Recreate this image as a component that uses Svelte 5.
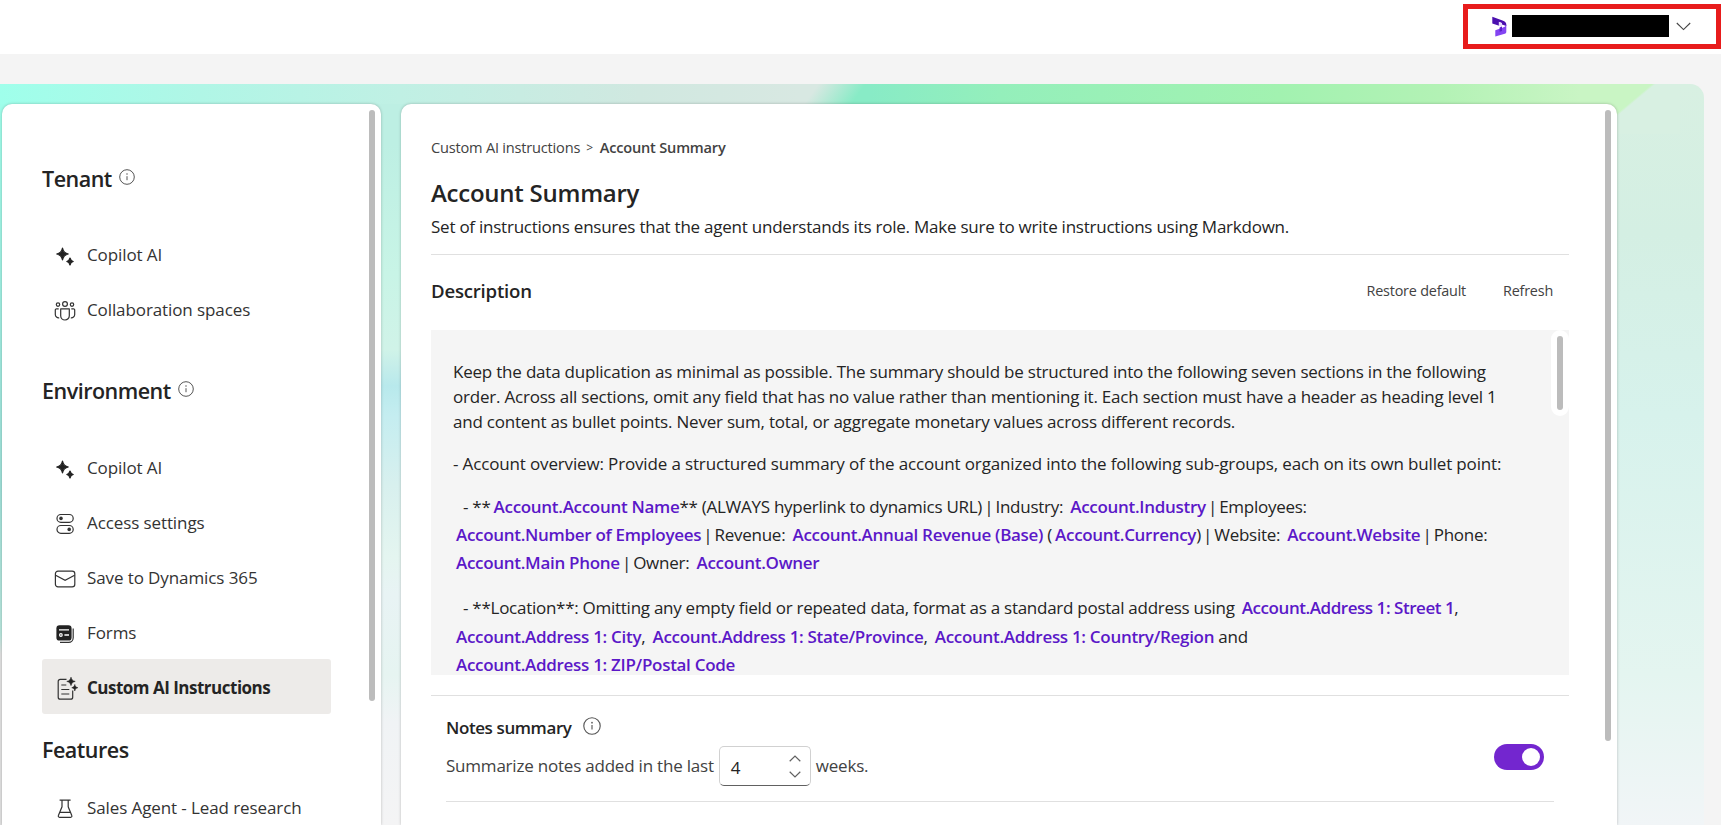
<script>
  const groups = [
    {
      title: 'Tenant',
      info: true,
      items: [
        { label: 'Copilot AI', icon: 'sparkle' },
        { label: 'Collaboration spaces', icon: 'people' },
      ],
    },
    {
      title: 'Environment',
      info: true,
      items: [
        { label: 'Copilot AI', icon: 'sparkle' },
        { label: 'Access settings', icon: 'toggles' },
        { label: 'Save to Dynamics 365', icon: 'mail' },
        { label: 'Forms', icon: 'forms' },
        { label: 'Custom AI Instructions', icon: 'doc', active: true },
      ],
    },
    {
      title: 'Features',
      items: [{ label: 'Sales Agent - Lead research', icon: 'flask' }],
    },
  ];

  let weeks = $state(4);
  let enabled = $state(true);
</script>

{#snippet info(size)}
  <svg class="info" width={size} height={size} viewBox="0 0 16 16" fill="none" stroke="#555">
    <circle cx="8" cy="8" r="7.3" />
    <path d="M8 7.2v4" />
    <circle cx="8" cy="5" r=".75" fill="#555" stroke="none" />
  </svg>
{/snippet}

{#snippet icon(name)}
  <svg class="icon" width="22" height="22" viewBox="0 0 22 22" fill="none" stroke="#333" stroke-width="1.2">
    {#if name === 'sparkle'}
      <g fill="#222" stroke="#222" stroke-width="1.2" stroke-linejoin="round">
        <path d="M8.500 3C9.300 6.800 11 8.300 14.300 9C11 9.700 9.300 11.200 8.500 15C7.700 11.200 6 9.700 2.700 9C6 8.300 7.700 6.800 8.500 3Z" />
        <path d="M16 13C16.500 15.200 17.200 16 19.200 16.500C17.200 17 16.500 17.800 16 20C15.500 17.800 14.800 17 12.800 16.500C14.800 16 15.500 15.200 16 13Z" />
      </g>
    {:else if name === 'people'}
      <circle cx="11" cy="4" r="2.4" />
      <circle cx="4" cy="4.600" r="1.700" />
      <circle cx="18" cy="4.600" r="1.700" />
      <path d="M6.700 8.800h8.600v6.900a4.300 4.300 0 0 1-8.600 0z" stroke-linejoin="round" />
      <path d="M4.700 8.800H2.600a1.300 1.300 0 0 0-1.300 1.300v4.400a3.400 3.400 0 0 0 3.900 3.300M17.300 8.800h2.100a1.300 1.300 0 0 1 1.300 1.300v4.400a3.400 3.400 0 0 1-3.900 3.300" />
    {:else if name === 'toggles'}
      <rect x="3" y="1.500" width="16.200" height="7.800" rx="3.900" />
      <circle cx="7" cy="5.400" r="1.800" fill="#333" stroke="none" />
      <rect x="3" y="12.500" width="16.200" height="7.800" rx="3.900" />
      <circle cx="15.200" cy="16.400" r="1.800" fill="#333" stroke="none" />
    {:else if name === 'mail'}
      <rect x="1.400" y="3.200" width="19.400" height="15.600" rx="2.600" />
      <path d="M1.600 7.200l9.500 5.200 9.500-5.200" />
    {:else if name === 'forms'}
      <rect x="2.400" y="2.200" width="15.200" height="15.400" rx="3.200" fill="#222" stroke="none" />
      <path d="M5 6.900h10M10.400 12h4.600" stroke="#fff" stroke-width="1.300" />
      <circle cx="6.900" cy="12" r="1.300" stroke="#fff" />
      <path d="M19.200 5.500v9.300a4.600 4.600 0 0 1-4.600 4.600H6" />
    {:else if name === 'doc'}
      <path d="M12.500 1.400H6.200a2 2 0 0 0-2 2v15.800a2 2 0 0 0 2 2h10.500a2 2 0 0 0 2-2V12.500" />
      <path d="M7.300 7h5M7.300 11.500h8M7.300 16h8" />
      <g fill="#222" stroke="#222" stroke-width=".6">
        <path d="M17 -.8C17.700 1.900 18.500 2.700 21.200 3.400C18.500 4.100 17.700 4.900 17 7.600C16.300 4.900 15.500 4.100 12.800 3.400C15.500 2.700 16.300 1.900 17 -.8Z" />
        <path d="M20.800 6.500C21.200 8.500 21.800 9.100 23.800 9.700C21.800 10.300 21.200 10.900 20.800 12.900C20.400 10.900 19.800 10.300 17.800 9.700C19.800 9.100 20.400 8.500 20.800 6.500Z" />
      </g>
    {:else if name === 'flask'}
      <path d="M5.600 2.200h11M8 2.400v6.400L4.400 17.600a1.200 1.200 0 0 0 1.100 1.700h11.200a1.200 1.200 0 0 0 1.100-1.700L14.200 8.800V2.400M5.700 14.400h10.800" />
    {/if}
  </svg>
{/snippet}

{#snippet bar()}<span class="bar">|</span>{/snippet}

<div class="app">
  <header>
    <div class="env-picker">
      <svg width="15" height="21" viewBox="0 0 15 21">
        <path d="M.3.800L10.500 4.600C13.200 5.600 14.300 6.600 14.300 9v1L10 8.500V7.200L7.200 6v3.800L.3 7.400z" fill="#4b0fae" />
        <path d="M6.800 5.800L10 7v4L6.800 9.800z" fill="#e9dcff" />
        <path d="M14.300 8v7.800c0 1-.5 1.600-1.500 2L3.300 20.600V14.200L9 12.200C11 11.500 14 11 14.300 8z" fill="#8344f2" />
        <path d="M7.600 11.500L10 10.600V15L7.600 15.800z" fill="#5a1ec8" />
      </svg>
      <span class="redacted"></span>
      <svg width="15" height="9" viewBox="0 0 15 9" fill="none" stroke="#444" stroke-width="1.100">
        <path d="M.8 1l6.700 6.600L14.200 1" />
      </svg>
    </div>
  </header>

  <div class="stage">
    <nav class="card">
      <div class="nav-list">
        {#each groups as g (g.title)}
          <section>
            <h2>{g.title}{#if g.info}{@render info(16)}{/if}</h2>
            {#each g.items as item (item.label)}
              <a class="nav-item" class:active={item.active} href="#top">
                {@render icon(item.icon)}
                <span>{item.label}</span>
              </a>
            {/each}
          </section>
        {/each}
      </div>
      <div class="thumb nav-thumb"></div>
    </nav>

    <main class="card">
      <div class="content">
        <div class="crumbs">
          <span>Custom AI instructions</span>
          <span class="sep">&gt;</span>
          <b>Account Summary</b>
        </div>
        <h1>Account Summary</h1>
        <p class="lead">Set of instructions ensures that the agent understands its role. Make sure to write instructions using Markdown.</p>

        <div class="toolbar">
          <h3>Description</h3>
          <button class="restore">Restore default</button>
          <button>Refresh</button>
        </div>

        <div class="editor">
          <div class="text">
            <p>
              Keep the data duplication as minimal as possible. The summary should be structured into the following seven sections in the following<br />
              order. Across all sections, omit any field that has no value rather than mentioning it. Each section must have a header as heading level 1<br />
              and content as bullet points. Never sum, total, or aggregate monetary values across different records.
            </p>
            <p class="overview">- Account overview: Provide a structured summary of the account organized into the following sub-groups, each on its own bullet point:</p>
            <p class="fields">
              <span class="indent">- **</span><b>Account.Account Name</b>** (ALWAYS hyperlink to dynamics URL) {@render bar()} Industry: <b>Account.Industry</b> {@render bar()} Employees:<br />
              <b>Account.Number of Employees</b> {@render bar()} Revenue: <b>Account.Annual Revenue (Base)</b> (<b>Account.Currency</b>) {@render bar()} Website: <b>Account.Website</b> {@render bar()} Phone:<br />
              <b>Account.Main Phone</b> {@render bar()} Owner: <b>Account.Owner</b>
            </p>
            <p class="fields address">
              <span class="indent">- **Location**: Omitting any empty field or repeated data, format as a standard postal address using</span> <b class="street">Account.Address 1: Street 1</b>,<br />
              <b>Account.Address 1: City</b>, <b>Account.Address 1: State/Province</b>, <b>Account.Address 1: Country/Region</b> and<br />
              <b>Account.Address 1: ZIP/Postal Code</b>
            </p>
          </div>
          <div class="track"><div class="thumb"></div></div>
        </div>

        <div class="notes">
          <div class="notes-text">
            <h4>Notes summary {@render info(18)}</h4>
            <div class="weeks">
              <span>Summarize notes added in the last</span>
              <div class="spin">
                <span>{weeks}</span>
                <div class="arrows">
                  <button aria-label="More" onclick={() => weeks++}>
                    <svg width="12" height="7" viewBox="0 0 12 7"><path d="M.7 6.200L6 1l5.300 5.200" /></svg>
                  </button>
                  <button aria-label="Less" onclick={() => weeks--}>
                    <svg width="12" height="7" viewBox="0 0 12 7"><path d="M.7.800L6 6l5.300-5.200" /></svg>
                  </button>
                </div>
              </div>
              <span>weeks.</span>
            </div>
          </div>
          <button class="switch" class:on={enabled} aria-label="Notes summary" onclick={() => (enabled = !enabled)}>
            <i></i>
          </button>
        </div>
      </div>
      <div class="thumb main-thumb"></div>
    </main>
  </div>
</div>

<style>
  :global(body) {
    background: #f4f4f4;
    overflow: hidden;
  }

  .app {
    display: flex;
    flex-direction: column;
    height: 825px;
    overflow: hidden;
    font-family: 'Open Sans', 'Noto Sans', sans-serif;
    font-size: 17px;
    letter-spacing: -0.21px;
    color: #242424;
  }

  h1, h2, h3, h4, p {
    margin: 0;
    font-weight: 600;
  }
  p {
    font-weight: 400;
  }
  b {
    font-weight: 600;
  }
  button {
    all: unset;
    cursor: pointer;
  }
  svg {
    display: block;
    flex: none;
    overflow: visible;
  }

  header {
    display: flex;
    justify-content: flex-end;
    align-items: flex-start;
    flex: none;
    height: 54px;
    padding-top: 4px;
    box-sizing: border-box;
    background: #fff;
  }
  .env-picker {
    display: flex;
    align-items: center;
    width: 258px;
    height: 45px;
    padding: 0 0 0 24px;
    box-sizing: border-box;
    border: 5px solid #e81c1c;
  }
  .redacted {
    width: 157px;
    height: 22px;
    margin: 0 7px 1px 5px;
    background: #000;
  }

  .stage {
    display: flex;
    gap: 20px;
    flex: 1;
    min-height: 0;
    width: 1704px;
    margin-top: 30px;
    padding: 20px 0 0 2px;
    box-sizing: border-box;
    border-radius: 0 14px 0 0;
    background:
      linear-gradient(140deg, #c9f5c4 49%, #d8f0e2 51%) 1580px -10px / 100px 60px no-repeat,
      linear-gradient(90deg, #88ebc6, #94efbb 130px, #a2f2b0 410px, #b3f2b5 570px, #c9f5c4) 870px 0 / 710px 20px no-repeat,
      linear-gradient(125deg, rgba(136, 235, 198, 0) 22%, #88ebc6 78%) 800px 0 / 70px 20px no-repeat,
      linear-gradient(90deg, #9fffeb, #b0f6e6 200px, #c0f0e4 400px, #d0e8e0 640px, #d8e8e2 800px) 0 0 / 900px 20px no-repeat,
      linear-gradient(#d8f0e2, #d4efe3 150px, #d7f2ec 330px, #e4f5f0 590px, #f1f5f7) 1600px 0 / 104px 741px no-repeat,
      linear-gradient(#bdefe3, #bdefe3 60px, #c8f4e6 189px, #d0f3e8 265px, #c4edea 284px, #b8e9ec 302px, #c4edf0 331px, #d8f0ee 402px, #e4f5f0 473px, #e8f3f4 510px, #e6f4f1 591px, #f0f3f5 638px, #f4f4f5) 300px 0 / 200px 741px no-repeat,
      linear-gradient(#9fffeb, #9fe0d8 400px, #b8e6dc 550px, #e0e0e0 570px);
  }

  .card {
    display: flex;
    justify-content: space-between;
    flex: none;
    padding: 0 6px;
    box-sizing: border-box;
    border-radius: 10px 10px 0 0;
    background: #fff;
    box-shadow: 0 0 3px rgba(0, 0, 0, 0.25);
  }
  nav {
    width: 379px;
  }
  main {
    width: 1216px;
  }
  .thumb {
    flex: none;
    width: 6px;
    margin-top: 6px;
    border-radius: 3px;
    background: #bcbcbc;
  }
  .nav-thumb {
    height: 591px;
  }
  .main-thumb {
    height: 631px;
  }

  .nav-list {
    width: 289px;
    padding: 57px 0 0 34px;
  }
  h2 {
    display: flex;
    height: 65px;
    font-size: 21.5px;
    line-height: 36px;
    letter-spacing: -0.5px;
  }
  h2 :global(svg) {
    margin: 8px 0 0 7px;
  }
  section + section h2 {
    height: 66px;
    padding-top: 37px;
  }
  section:last-child h2 {
    height: 47px;
    padding-top: 18px;
  }
  .nav-item {
    display: flex;
    align-items: center;
    gap: 11px;
    height: 55px;
    padding: 2px 0 0 12px;
    box-sizing: border-box;
    border-radius: 3px;
    color: #333;
    letter-spacing: -0.1px;
    text-decoration: none;
  }
  .icon {
    margin-top: 3px;
  }
  .nav-item.active {
    background: #edebe9;
    color: #242424;
    font-weight: 700;
    letter-spacing: -0.5px;
  }

  .content {
    width: 1138px;
    padding: 29px 0 0 24px;
  }
  .crumbs {
    display: flex;
    align-items: center;
    height: 28px;
    font-size: 14.6px;
    color: #424242;
  }
  .sep {
    margin: 0 7px 0 6px;
    font-size: 12px;
  }
  h1 {
    height: 54px;
    font-size: 24px;
    line-height: 63px;
    letter-spacing: -0.25px;
  }
  .lead {
    height: 39px;
    line-height: 23px;
    letter-spacing: -0.24px;
    border-bottom: 1px solid #e0e0e0;
  }
  .toolbar {
    display: flex;
    align-items: center;
    height: 75px;
    padding: 0 16px 4px 0;
    box-sizing: border-box;
    font-size: 14.4px;
    color: #424242;
  }
  h3 {
    flex: 1;
    font-size: 18.6px;
    color: #242424;
  }
  .restore {
    margin-right: 37px;
  }

  .editor {
    display: flex;
    justify-content: space-between;
    height: 345px;
    overflow: hidden;
    background: #f5f5f5;
  }
  .text {
    padding: 29px 0 0 22px;
    line-height: 25px;
    white-space: nowrap;
  }
  .text p + p {
    margin-top: 17px;
  }
  .text .overview {
    letter-spacing: -0.15px;
  }
  .text .fields {
    line-height: 28px;
    letter-spacing: -0.27px;
  }
  .text .address {
    line-height: 28.5px;
  }
  .fields b {
    margin-left: 3px;
    color: #5b18c8;
    letter-spacing: -0.3px;
  }
  .fields .street {
    letter-spacing: -0.45px;
  }
  .bar {
    margin: 0 -2px;
  }
  .indent {
    padding-left: 10px;
  }
  .track {
    width: 18px;
    height: 86px;
    border-radius: 9px;
    background: #fff;
  }
  .track .thumb {
    height: 74px;
    margin: 6px;
  }

  .notes {
    display: flex;
    justify-content: space-between;
    margin-top: 20px;
    border-top: 1px solid #e0e0e0;
    padding: 0 15px;
  }
  .notes-text {
    flex: 1;
    height: 105px;
    border-bottom: 1px solid #e0e0e0;
  }
  h4 {
    display: flex;
    height: 50px;
    line-height: 64px;
    letter-spacing: -0.4px;
  }
  h4 :global(svg) {
    margin: 21px 0 0 11px;
  }
  .weeks {
    display: flex;
    align-items: center;
    height: 40px;
    line-height: 42px;
    color: #424242;
  }
  .spin {
    display: flex;
    justify-content: space-between;
    width: 92px;
    height: 40px;
    margin: 0 5px;
    padding: 0 9px 0 11px;
    box-sizing: border-box;
    border: 1px solid #d1d1d1;
    border-bottom-color: #616161;
    border-radius: 5px;
    color: #242424;
  }
  .arrows {
    display: flex;
    flex-direction: column;
    gap: 9px;
    padding-top: 8px;
  }
  .arrows button {
    height: 7px;
  }
  .arrows path {
    fill: none;
    stroke: #616161;
    stroke-width: 1.2;
  }
  .switch {
    width: 50px;
    height: 26px;
    margin: 48px 10px 0 -60px;
    border-radius: 13px;
    background: #bbb;
  }
  .switch.on {
    background: #7326cf;
  }
  .switch i {
    display: block;
    width: 18px;
    height: 18px;
    margin: 4px;
    border-radius: 50%;
    background: #fff;
  }
  .switch.on i {
    margin-left: 28px;
  }
</style>
